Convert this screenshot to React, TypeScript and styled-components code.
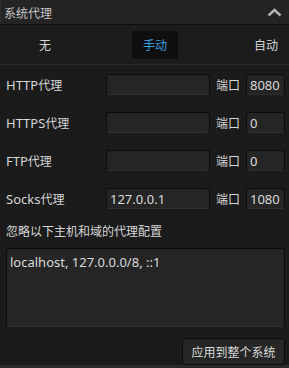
import React from "react";
import styled, { createGlobalStyle } from "styled-components";

const Global = createGlobalStyle`
  html, body { margin: 0; padding: 0; background: #1b1b1b; }
  * { box-sizing: border-box; }
  body { font-family: "Noto Sans", "Noto Sans CJK SC", sans-serif; }
`;

const Panel = styled.div`
  width: 289px;
  height: 368px;
  background: #1b1b1b;
  display: flex;
  flex-direction: column;
  color: #d6d6d6;
  font-size: 13px;
  border-bottom: 3px solid #2a2a2a;
`;

const Header = styled.div`
  height: 25px;
  flex: none;
  background: #242424;
  border-bottom: 1px solid #0f0f0f;
  border-left: 1px solid #2e2e2e;
  display: flex;
  align-items: center;
  justify-content: space-between;
  padding: 0 7px 0 3px;
  color: #c4c4c4;
  font-family: "Noto Sans CJK SC", sans-serif;
  font-size: 12px;
`;

const Tabs = styled.div`
  height: 40px;
  flex: none;
  display: grid;
  grid-template-columns: 90px 130px 1fr;
  align-items: center;
  border-bottom: 1px solid #2b2b2b;
  background: #1c1c1c;
`;

const Tab = styled.div<{ $active?: boolean; $align?: string }>`
  justify-self: ${(p) => p.$align || "center"};
  height: 28px;
  padding: 0 ${(p) => (p.$active ? "11px" : "0")};
  margin-right: ${(p) => (p.$align === "end" ? "11px" : "0")};
  display: flex;
  align-items: center;
  background: ${(p) => (p.$active ? "#0f0f0f" : "transparent")};
  color: ${(p) => (p.$active ? "#3a9fe0" : "#d6d6d6")};
  font-family: "Noto Sans CJK SC", sans-serif;
  font-size: 12px;
`;

const Form = styled.div`
  display: flex;
  flex-direction: column;
  padding: 9px 4px 0 6px;
  gap: 17px;
`;

const Row = styled.div`
  display: flex;
  align-items: center;
  height: 21px;
`;

const Label = styled.div`
  width: 100px;
  font-family: "Noto Sans", "Noto Sans CJK SC", sans-serif;
  font-size: 13px;
  color: #d6d6d6;
`;

const Cjk = styled.span`
  font-family: "Noto Sans CJK SC", sans-serif;
  font-size: 12px;
`;

const Field = styled.div<{ $w: number }>`
  width: ${(p) => p.$w}px;
  height: 21px;
  background: #252525;
  border: 1px solid #0c0c0c;
  border-bottom-color: #2f2f2f;
  border-radius: 3px;
  display: flex;
  align-items: center;
  padding-left: 3px;
  color: #dadada;
  font-size: 13px;
  font-family: "Noto Sans", sans-serif;
`;

const PortLabel = styled.div`
  width: 36px;
  padding-left: 6px;
  font-family: "Noto Sans CJK SC", sans-serif;
  font-size: 12px;
  color: #d6d6d6;
`;

const Note = styled.div`
  margin-top: -4px;
  font-family: "Noto Sans CJK SC", sans-serif;
  font-size: 12px;
  color: #d6d6d6;
`;

const TextArea = styled.div`
  margin: 9px 4px 0 6px;
  height: 79px;
  background: #252525;
  border: 1px solid #0c0c0c;
  border-bottom-color: #2f2f2f;
  border-radius: 3px;
  padding: 4px 3px;
  color: #dadada;
  font-family: "Noto Sans", sans-serif;
  font-size: 13px;
`;

const Footer = styled.div`
  display: flex;
  justify-content: flex-end;
  padding: 11px 4px 0 0;
`;

const Button = styled.div`
  width: 103px;
  height: 27px;
  background: #262626;
  border: 1px solid #0c0c0c;
  border-radius: 3px;
  display: flex;
  align-items: center;
  justify-content: center;
  color: #dadada;
  font-family: "Noto Sans CJK SC", sans-serif;
  font-size: 12px;
`;

const rows = [
  { proto: "HTTP", host: "", port: "8080" },
  { proto: "HTTPS", host: "", port: "0" },
  { proto: "FTP", host: "", port: "0" },
  { proto: "Socks", host: "127.0.0.1", port: "1080" },
];

export default function App() {
  return (
    <>
      <Global />
      <Panel>
        <Header>
          <span>系统代理</span>
          <svg width="15" height="9" viewBox="0 0 15 9">
            <path d="M1.5 7.5 L7.5 2 L13.5 7.5" fill="none" stroke="#b4b4b4" strokeWidth="2.4" />
          </svg>
        </Header>
        <Tabs>
          <Tab>无</Tab>
          <Tab $active>手动</Tab>
          <Tab $align="end">自动</Tab>
        </Tabs>
        <Form>
          {rows.map((r) => (
            <Row key={r.proto}>
              <Label>
                {r.proto}
                <Cjk>代理</Cjk>
              </Label>
              <Field $w={104}>{r.host}</Field>
              <PortLabel>端口</PortLabel>
              <Field $w={39}>{r.port}</Field>
            </Row>
          ))}
          <Note>忽略以下主机和域的代理配置</Note>
        </Form>
        <TextArea>localhost, 127.0.0.0/8, ::1</TextArea>
        <Footer>
          <Button>应用到整个系统</Button>
        </Footer>
      </Panel>
    </>
  );
}
